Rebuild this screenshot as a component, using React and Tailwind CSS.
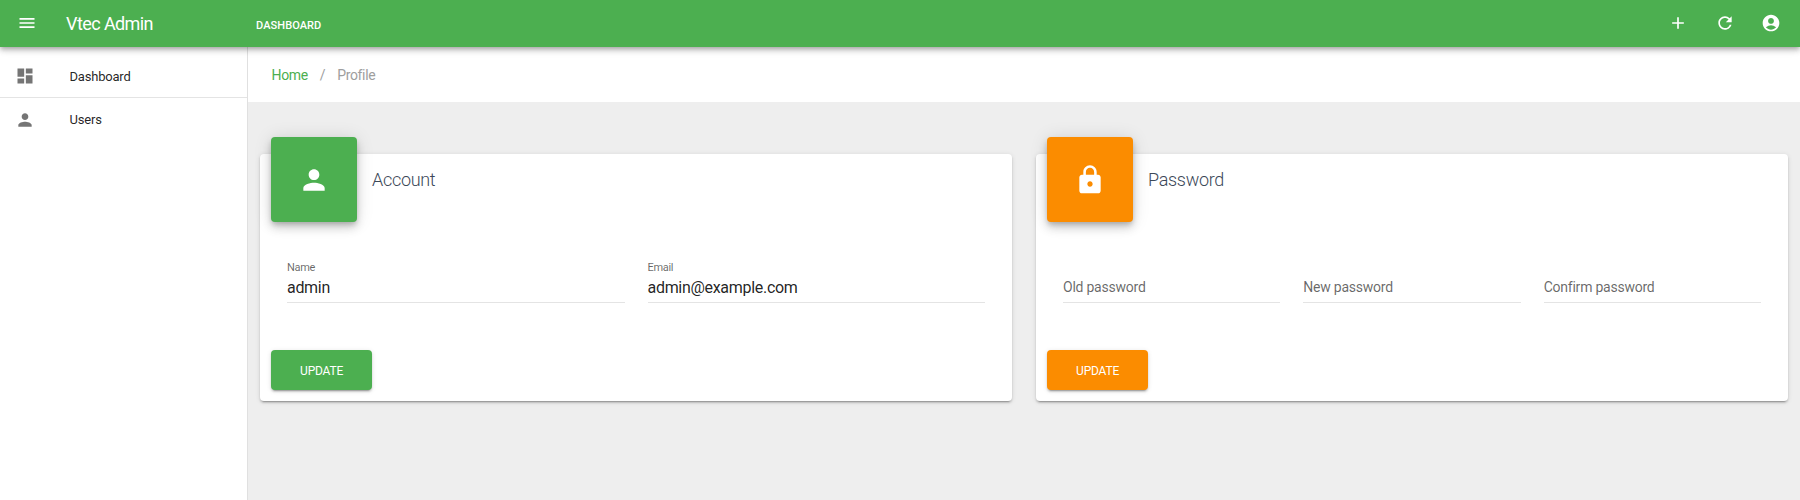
import React from "react";
import {
  MdMenu,
  MdAdd,
  MdRefresh,
  MdAccountCircle,
  MdDashboard,
  MdPerson,
  MdLock,
} from "react-icons/md";

function Header() {
  return (
    <header className="relative z-20 flex h-[47px] shrink-0 items-center bg-[#4caf50] text-white shadow-[0_2px_4px_-1px_rgba(0,0,0,0.2),0_4px_5px_0_rgba(0,0,0,0.14),0_1px_10px_0_rgba(0,0,0,0.12)]">
      <div className="flex w-[256px] items-center pl-[17px]">
        <MdMenu className="mb-px h-5 w-5" />
        <span className="pl-[29px] text-[18px] leading-6 tracking-[-0.58px]">Vtec Admin</span>
      </div>
      <a className="pt-[4px] text-[11px] leading-4 font-medium tracking-[0.08px]">DASHBOARD</a>
      <div className="mb-px ml-auto flex items-center gap-[26.5px] pr-[19px]">
        <MdAdd className="h-5 w-5" />
        <MdRefresh className="h-5 w-5" />
        <MdAccountCircle className="h-5 w-5" />
      </div>
    </header>
  );
}

function NavItem({ icon: Icon, label, className, labelClass }) {
  return (
    <li className={"flex items-center pl-[15px] " + className}>
      <Icon className="h-5 w-5 text-[#757575]" />
      <span className={"pl-[34.5px] text-[13px] leading-5 tracking-[-0.2px] text-black/87 " + labelClass}>{label}</span>
    </li>
  );
}

function Card({ title, icon: Icon, color, children }) {
  return (
    <section className="flex h-[247px] flex-1 flex-col rounded-[4px] bg-white px-[11.2px] shadow-[0_3px_1px_-2px_rgba(0,0,0,0.2),0_2px_2px_0_rgba(0,0,0,0.14),0_1px_5px_0_rgba(0,0,0,0.12)]">
      <div className="-mt-[17px] flex h-[85px]">
        <div
          className={
            "flex h-[85px] w-[85.4px] items-center justify-center rounded-[4px] text-white shadow-[0_3px_5px_-1px_rgba(0,0,0,0.2),0_6px_10px_0_rgba(0,0,0,0.14),0_1px_18px_0_rgba(0,0,0,0.12)] " +
            color
          }
        >
          <Icon className="h-8 w-8" />
        </div>
        <h2 className="pt-[31px] pl-[15.4px] text-[18px] leading-6 font-light tracking-[-0.3px] text-[#3c4858]">
          {title}
        </h2>
      </div>
      <div className="mt-[32px] flex gap-[23px] px-[15.8px]">{children}</div>
      <button
        className={
          "mt-[47px] h-[40px] w-[100.8px] rounded-[4px] pt-px text-[12px] tracking-[-0.2px] text-white shadow-[0_3px_1px_-2px_rgba(0,0,0,0.2),0_2px_2px_0_rgba(0,0,0,0.14),0_1px_5px_0_rgba(0,0,0,0.12)] " +
          color
        }
      >
        UPDATE
      </button>
    </section>
  );
}

function Field({ label, value }) {
  return (
    <div className="flex h-[49px] flex-1 flex-col border-b border-[#e4e4e4]">
      {value ? (
        <>
          <span className="pt-[8px] text-[11px] leading-3 tracking-[-0.3px] text-black/60">{label}</span>
          <span className="pt-[4px] text-[16px] leading-5 tracking-[-0.3px] text-black/87">{value}</span>
        </>
      ) : (
        <span className="pt-[23px] text-[14px] leading-5 tracking-[-0.23px] text-black/60">{label}</span>
      )}
    </div>
  );
}

export default function App() {
  return (
    <div className="flex h-[500px] w-full flex-col overflow-hidden bg-[#eeeeee] font-[Roboto,sans-serif]">
      <Header />
      <div className="flex flex-1">
        <nav className="w-[248px] shrink-0 border-r border-[#e0e0e0] bg-white">
          <ul>
            <NavItem
              icon={MdDashboard}
              label="Dashboard"
              className="h-[51px] border-b border-[#e4e4e4] pt-[7px]"
              labelClass="pt-[2px]"
            />
            <NavItem icon={MdPerson} label="Users" className="h-[43px]" labelClass="pt-px" />
          </ul>
        </nav>
        <main className="flex flex-1 flex-col">
          <div className="flex h-[55px] items-center bg-white pl-[23.5px] text-[14px] leading-5 tracking-[-0.35px] text-[#9e9e9e]">
            <a className="text-[#4caf50]">Home</a>
            <span className="px-3">/</span>
            <span>Profile</span>
          </div>
          <div className="flex gap-6 pt-[52px] pr-3 pl-3">
            <Card title="Account" icon={MdPerson} color="bg-[#4caf50]">
              <Field label="Name" value="admin" />
              <Field label="Email" value="admin@example.com" />
            </Card>
            <Card title="Password" icon={MdLock} color="bg-[#fb8c00]">
              <Field label="Old password" />
              <Field label="New password" />
              <Field label="Confirm password" />
            </Card>
          </div>
        </main>
      </div>
    </div>
  );
}
